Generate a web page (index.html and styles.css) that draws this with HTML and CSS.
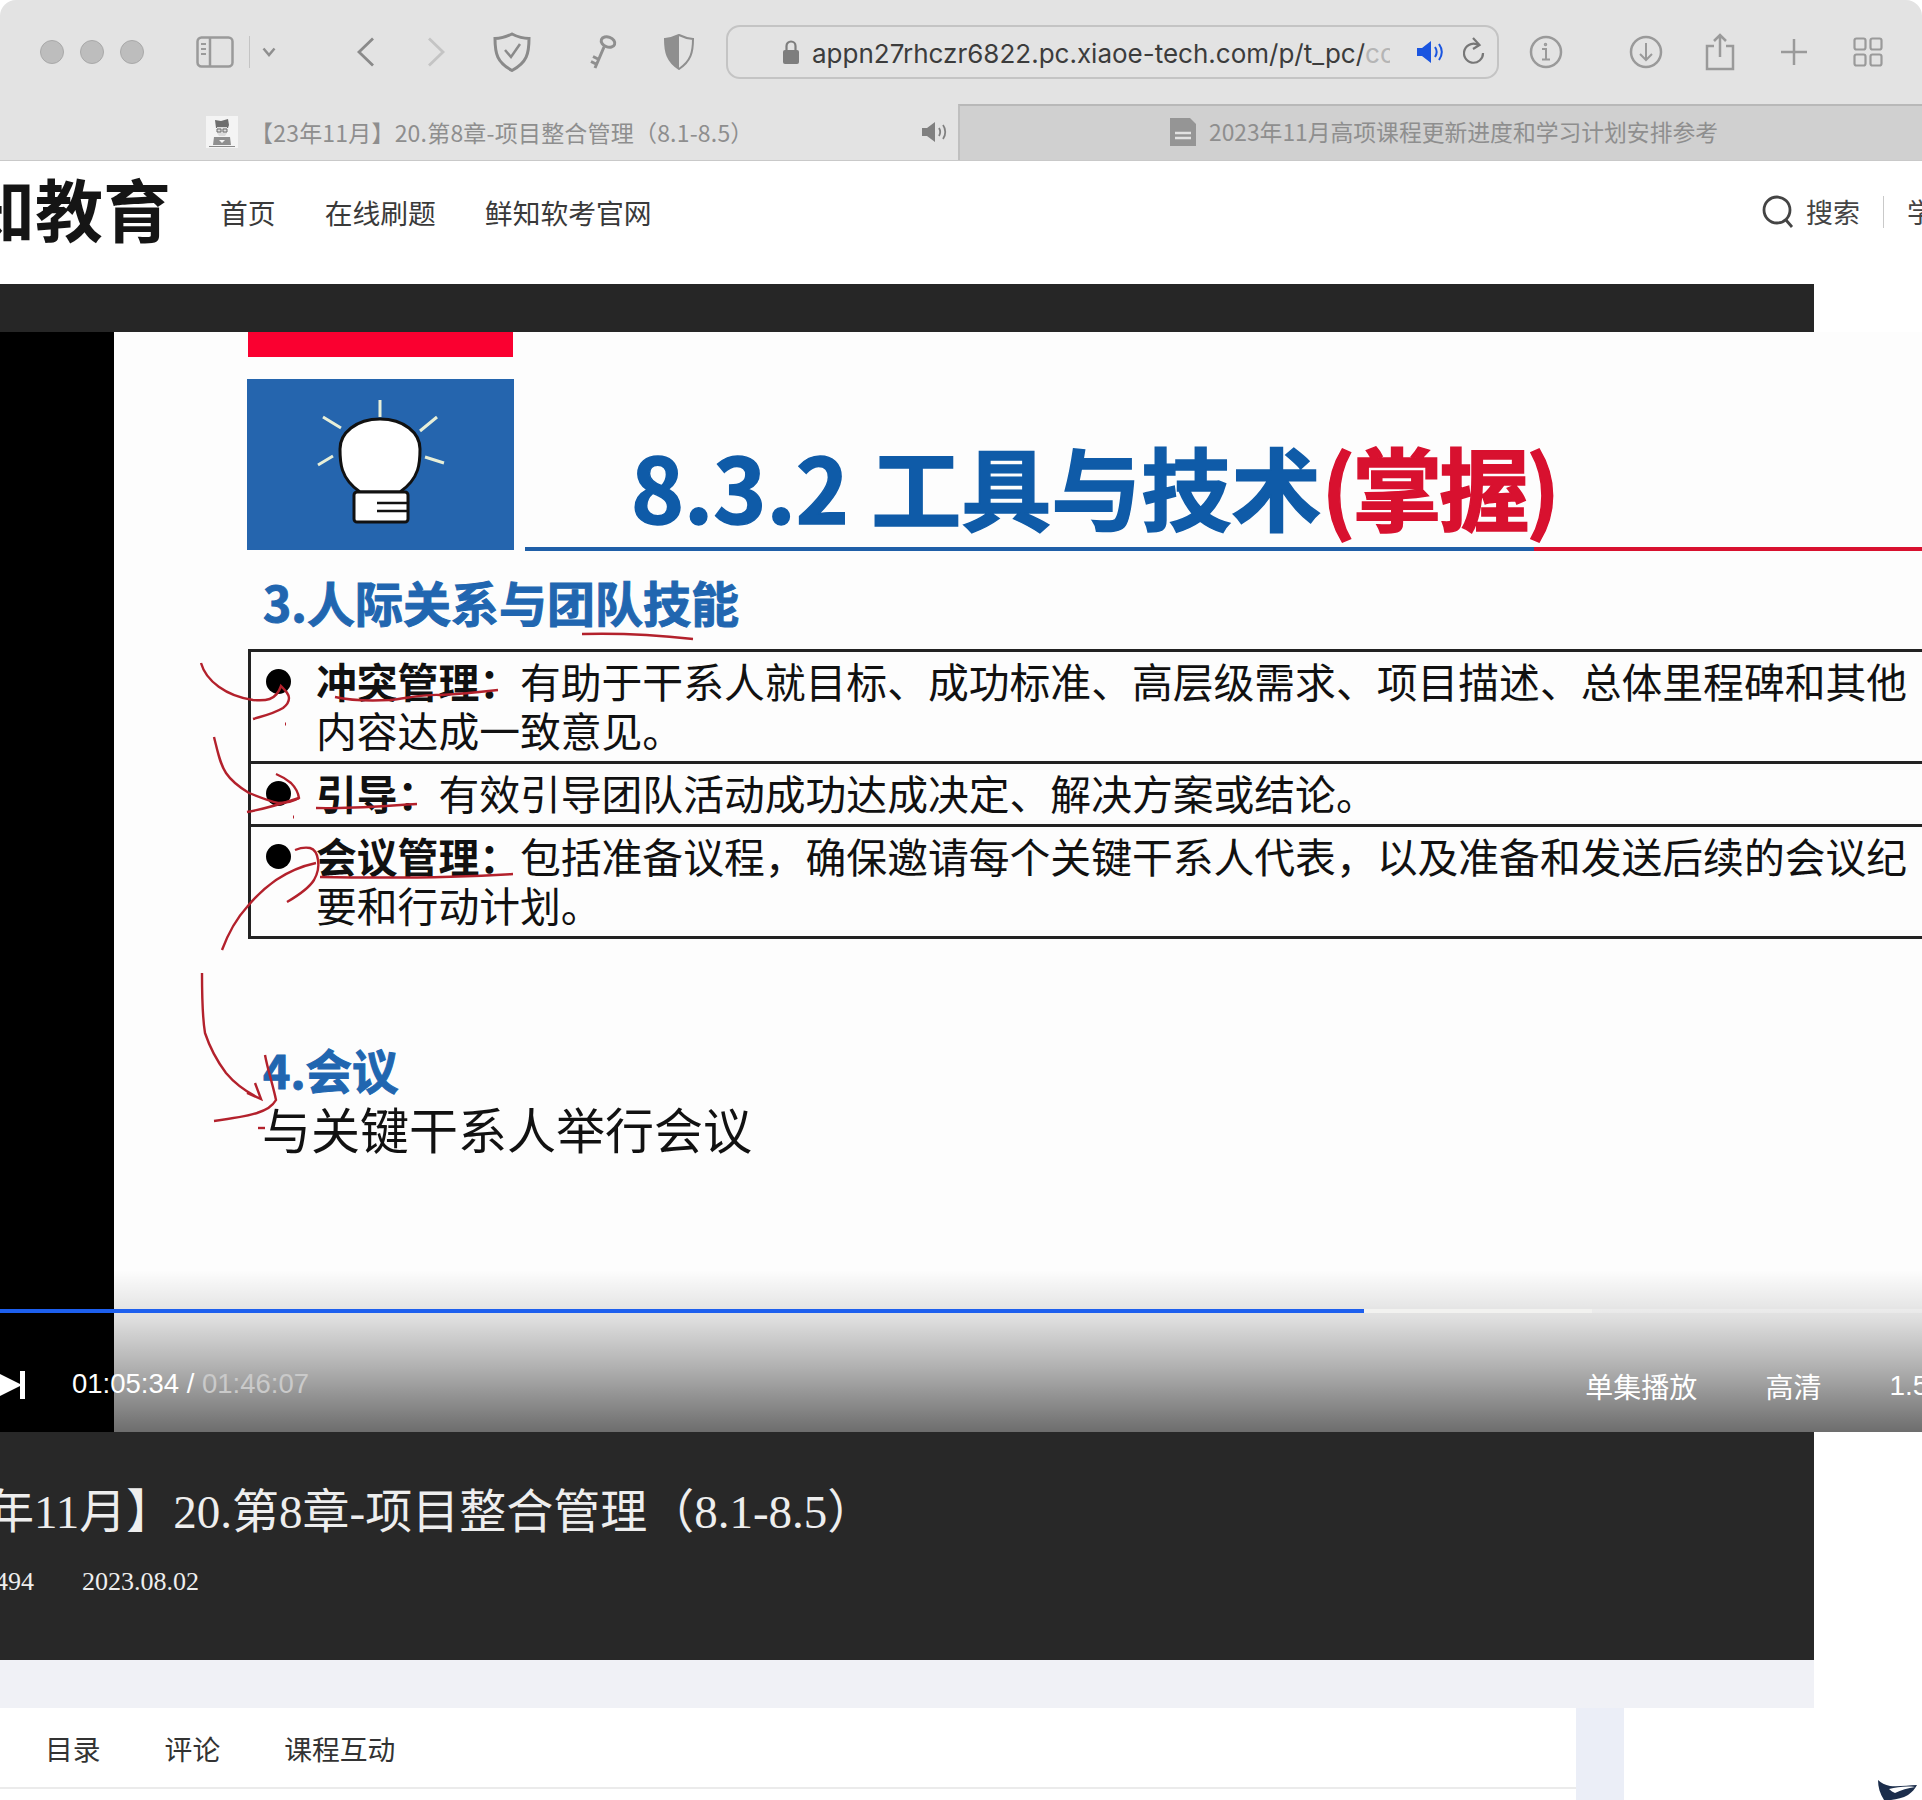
FILE: index.html
```html
<!DOCTYPE html>
<html lang="zh-CN">
<head>
    <meta charset="UTF-8">
    <title>20.第8章-项目整合管理</title>
    <link rel="stylesheet" href="styles.css">
</head>
<body>
    <div class="browser">
        <div class="toolbar">
            <div class="lights"><span></span><span></span><span></span></div>
            <svg class="ico sidebar-ico" width="38" height="32" viewBox="0 0 38 32" fill="none" stroke="#9a9a9a" stroke-width="2.5"><rect x="1.5" y="1.5" width="35" height="29" rx="4"/><path d="M14 2v28"/><path d="M5 8h5M5 13h5M5 18h5" stroke-width="2"/></svg>
            <span class="tool-sep"></span>
            <svg class="ico chevron-ico" width="14" height="10" viewBox="0 0 14 10" fill="none" stroke="#8f8f8f" stroke-width="2.5"><path d="M1.5 1.5 7 8l5.5-6.5"/></svg>
            <svg class="ico back-ico" width="20" height="30" viewBox="0 0 20 30" fill="none" stroke="#8a8a8a" stroke-width="2.8"><path d="M17 1.5 3 15l14 13.5"/></svg>
            <svg class="ico fwd-ico" width="20" height="30" viewBox="0 0 20 30" fill="none" stroke="#c4c4c4" stroke-width="2.8"><path d="M3 1.5 17 15 3 28.5"/></svg>
            <svg class="ico shield-ico" width="38" height="40" viewBox="0 0 38 40" fill="none" stroke="#8a8a8a" stroke-width="3"><path d="M19 2c6 3 11 4.500 17 4.500 0 15-2 24-17 32C4 30.500 2 21.500 2 6.500 8 6.500 13 5 19 2z"/><path d="m12 18 6 7 9-13" stroke-width="2.500"/></svg>
            <svg class="ico key-ico" width="28" height="36" viewBox="0 0 28 36" fill="none" stroke="#8f8f8f" stroke-width="3"><ellipse cx="19" cy="8" rx="7" ry="5" transform="rotate(20 19 8)"/><path d="M15 13 6 34M9 25l-5-2.500M7 30l-5-2.500"/></svg>
            <svg class="ico half-ico" width="30" height="36" viewBox="0 0 30 36"><path d="M15 1c5 2.500 9 3.500 14 4 0 13-2 22-14 30C3 27 1 18 1 5c5-.5 9-1.500 14-4z" fill="none" stroke="#8f8f8f" stroke-width="2"/><path d="M15 1v34C3 27 1 18 1 5c5-.5 9-1.500 14-4z" fill="#8f8f8f"/></svg>

            <div class="address">
                <svg class="lock" width="18" height="26" viewBox="0 0 18 26"><path d="M4.500 12V7a4.500 4.500 0 0 1 9 0v5" fill="none" stroke="#7e7e7e" stroke-width="2.200"/><rect x="1" y="11" width="16" height="14" rx="2" fill="#7e7e7e"/></svg>
                <span class="url">appn27rhczr6822.pc.xiaoe-tech.com/p/t_pc/<span class="url-fade">course</span></span>
                <svg class="speaker" width="28" height="24" viewBox="0 0 28 24"><path d="M1 8h5l9-7v22l-9-7H1z" fill="#1a55e0"/><path d="M19 7c2 3 2 7 0 10M23 4c3.500 5 3.500 11 0 16" fill="none" stroke="#1a55e0" stroke-width="2"/></svg>
                <svg class="reload" width="22" height="30" viewBox="0 0 22 30" fill="none" stroke="#777" stroke-width="2.200"><path d="M16 8.500A9.500 9.500 0 1 0 20 16"/><path d="m10 1 6.500 7L10 12"/></svg>
            </div>

            <svg class="ico info-ico" width="34" height="34" viewBox="0 0 34 34" fill="none" stroke="#9a9a9a" stroke-width="2.500"><circle cx="17" cy="17" r="15"/><path d="M13 14h4v10M13 24.500h8" stroke-width="2"/><circle cx="16.500" cy="9.500" r="1" stroke-width="1.500"/></svg>
            <svg class="ico down-ico" width="34" height="34" viewBox="0 0 34 34" fill="none" stroke="#9a9a9a" stroke-width="2.500"><circle cx="17" cy="17" r="15"/><path d="M17 8v17M11 19l6 6 6-6" stroke-width="2"/></svg>
            <svg class="ico share-ico" width="30" height="38" viewBox="0 0 30 38" fill="none" stroke="#9a9a9a" stroke-width="2.500"><path d="M9 13H2v23h26V13h-7"/><path d="M15 24V2M9 8l6-6 6 6"/></svg>
            <svg class="ico plus-ico" width="28" height="28" viewBox="0 0 28 28" stroke="#9a9a9a" stroke-width="2.500"><path d="M14 1v26M1 14h26"/></svg>
            <svg class="ico grid-ico" width="30" height="30" viewBox="0 0 30 30" fill="none" stroke="#9a9a9a" stroke-width="2.200"><rect x="1.500" y="1.500" width="11" height="11" rx="2"/><rect x="17.500" y="1.500" width="11" height="11" rx="2"/><rect x="1.500" y="17.500" width="11" height="11" rx="2"/><rect x="17.500" y="17.500" width="11" height="11" rx="2"/></svg>
        </div>

        <div class="tabs">
            <div class="tab tab-active">
                <svg class="favicon" width="32" height="32" viewBox="0 0 32 32"><rect width="32" height="32" fill="#f4f4f4"/><path d="M9 4l6 1 7-2 1 6-1 3H10z" fill="#6e6e6e"/><path d="M11 11h10v6l-2 3h-6l-2-3z" fill="#dcdcdc"/><path d="M11 13h4v3h-4zM17 13h4v3h-4z" fill="none" stroke="#6e6e6e"/><path d="M8 21h16l1 8H7z" fill="#8f8f8f"/><path d="M3 30h26v1H3z" fill="#8a8a8a"/><path d="M13 24h6l-3 3z" fill="#f4f4f4"/></svg>
                <span class="tab-title">【23年11月】20.第8章-项目整合管理（8.1-8.5）</span>
                <svg class="tab-sound" width="28" height="22" viewBox="0 0 28 22"><path d="M1 7h5l8-6v20l-8-6H1z" fill="#808080"/><path d="M18 7c1.500 2.500 1.500 5.500 0 8M22 4c3 4 3 10 0 14" fill="none" stroke="#808080" stroke-width="1.800"/></svg>
            </div>
            <div class="tab tab-other">
                <svg class="docicon" width="28" height="28" viewBox="0 0 28 28"><path d="M1 0h20l6 6v22H1z" fill="#959595"/><path d="M6 15h16M6 20h16" stroke="#e2e2e2" stroke-width="2.500"/></svg>
                <span class="tab-title">2023年11月高项课程更新进度和学习计划安排参考</span>
            </div>
        </div>
    </div>

    <header class="site-head">
        <div class="logo">知教育</div>
        <nav class="nav">
            <a>首页</a>
            <a>在线刷题</a>
            <a>鲜知软考官网</a>
        </nav>
        <div class="head-right">
            <svg width="34" height="34" viewBox="0 0 34 34" fill="none" stroke="#444" stroke-width="2.800"><circle cx="15" cy="15" r="13"/><path d="m24 25 6 7"/></svg>
            <span>搜索</span>
            <span class="head-sep"></span>
            <span>学习</span>
        </div>
    </header>

    <div class="band"></div>

    <section class="video">
        <div class="bars"></div>
        <div class="slide">
            <div class="red-tab"></div>
            <div class="slide-head">
                <div class="bulb-box">
                    <svg width="267" height="171" viewBox="0 0 267 171">
                        <g stroke="#e8efd8" stroke-width="3">
                            <path d="M133 21v17M76 38l18 11M190 38l-17 14M71 86l15-9M178 78l19 6"/>
                        </g>
                        <path d="M113 113c-20-14-20-30-20-43 0-16 16-30 40-30s40 14 40 30c0 13 0 29-20 43z" fill="#fff" stroke="#111" stroke-width="3"/>
                        <rect x="107" y="113" width="54" height="30" rx="3" fill="#fff" stroke="#111" stroke-width="3"/>
                        <path d="M130 124h30M130 132h30" stroke="#111" stroke-width="2.500"/>
                    </svg>
                </div>
                <h2 class="slide-title">8.3.2 工具与技术<span class="title-red">(掌握)</span></h2>
            </div>
            <div class="slide-rule"></div>
            <h3 class="sec-title">3.人际关系与团队技能</h3>
            <div class="points">
                <div class="point">
                    <i class="dot"></i>
                    <p><b>冲突管理：</b>有助于干系人就目标、成功标准、高层级需求、项目描述、总体里程碑和其他<br>内容达成一致意见。</p>
                </div>
                <div class="point">
                    <i class="dot"></i>
                    <p><b>引导：</b>有效引导团队活动成功达成决定、解决方案或结论。</p>
                </div>
                <div class="point">
                    <i class="dot"></i>
                    <p><b>会议管理：</b>包括准备议程，确保邀请每个关键干系人代表，以及准备和发送后续的会议纪<br>要和行动计划。</p>
                </div>
            </div>
            <h3 class="sec-title sec-meeting">4.会议</h3>
            <p class="meeting-text">与关键干系人举行会议</p>
        </div>

        <!-- red pen marks drawn on the video -->
        <svg class="pen" width="1922" height="1100" viewBox="0 332 1922 1100" fill="none" stroke="#b3212c" stroke-width="2.400">
            <path d="M201 663c5 18 25 33 52 37 12 1 23 1 28-14 5 5 8 8 8 12 0 4-2 7-6 10-10 6-20 8-30 11"/>
            <path d="M335 697c18 4 36 4 55 3 18-2 35-6 50-5 20-1 40-3 58-5"/>
            <path d="M214 737c4 16 6 27 12 36 6 9 13 14 23 20 10 4 20 8 29 10 8 0 16-2 21-5-1-6-4-11-8-15-5-4-10-7-15-9"/>
            <path d="M299 798c-18 6-35 11-52 14"/>
            <path d="M316 808c30 1 65-2 101-4"/>
            <path d="M222 950c6-16 14-31 25-43 10-12 19-20 29-27 12-8 26-14 40-17"/>
            <path d="M287 902c12-7 22-14 27-22 4-7 5-14 4-20-1-7-4-11-8-12-5-1-10 0-15 2"/>
            <path d="M320 877c60 1 130 1 193-3"/>
            <path d="M582 634c35-1 75 1 111 5"/>
            <path d="M202 973c0 22 0 42 3 60 5 15 12 28 21 40 10 12 22 20 35 26M255 1083l6 16-14-6"/>
            <path d="M265 1055c3 16 8 30 11 45-4 7-10 10-19 13-13 4-28 6-43 8"/>
            <path d="M258 1128h7"/>
            <path d="M285 724h1M293 817h1" stroke-width="3"/>
        </svg>

        <div class="controls">
            <div class="progress">
                <div class="progress-buf" style="width: 1592px"></div>
                <div class="progress-done" style="width: 1364px"></div>
            </div>
            <div class="ctrl-row">
                <svg class="next-ico" width="28" height="30" viewBox="0 0 28 30" fill="#fff"><path d="M-6 1 22 15-6 29z"/><rect x="20" y="1" width="5" height="28"/></svg>
                <span class="time">01:05:34 / <span class="time-total">01:46:07</span></span>
                <span class="ctrl-btn ctrl-mode">单集播放</span>
                <span class="ctrl-btn ctrl-hd">高清</span>
                <span class="ctrl-btn ctrl-speed">1.5X</span>
            </div>
        </div>
    </section>

    <section class="info">
        <h1 class="course-title">【23年11月】20.第8章-项目整合管理（8.1-8.5）</h1>
        <div class="course-meta"><span class="views">1494</span><span>2023.08.02</span></div>
    </section>
    <div class="info-gap"></div>

    <section class="below">
        <div class="below-main">
            <a>目录</a>
            <a>评论</a>
            <a>课程互动</a>
        </div>
        <div class="below-gap"></div>
        <div class="below-side">
            <svg width="44" height="20" viewBox="0 0 44 20"><path d="M0 0c3 3 7 5 12 6 9 1 18-1 27-1-2 4-5 7-9 10-5 3-11 4-17 5H6C2 14 0 7 0 0z" fill="#1b2d4b"/><path d="M11 9c8-2 17-3 26-2-7 1-14 3-20 6-2-1-4-2-6-4z" fill="#fff"/></svg>
        </div>
    </section>
</body>
</html>
```

FILE: styles.css
```css
* {
    box-sizing: border-box;
}

html, body {
    margin: 0;
    padding: 0;
    background: #fff;
}

body {
    width: 1922px;
    height: 1800px;
    overflow: hidden;
    font-family: "Noto Sans CJK SC", sans-serif;
}

/* browser chrome */
.browser {
    height: 161px;
    background: #e3e3e3;
    border-radius: 16px 16px 0 0;
    border-bottom: 1px solid #c9c9c9;
}

.toolbar {
    height: 104px;
    display: flex;
    align-items: center;
    padding-left: 40px;
}

.lights {
    display: flex;
    gap: 16px;
}

.lights span {
    width: 24px;
    height: 24px;
    border-radius: 50%;
    background: #bdbdbd;
    border: 1px solid #a9a9a9;
}

.ico {
    flex: none;
}

.sidebar-ico { margin-left: 52px; }
.tool-sep {
    width: 1px;
    height: 32px;
    background: #c4c4c4;
    margin-left: 15px;
}
.chevron-ico { margin-left: 12px; }
.back-ico { margin-left: 80px; }
.fwd-ico { margin-left: 50px; }
.shield-ico { margin-left: 47px; }
.key-ico { margin-left: 58px; }
.half-ico { margin-left: 47px; }

.address {
    width: 773px;
    height: 54px;
    margin-left: 32px;
    border: 2px solid #c4c4c4;
    border-radius: 14px;
    display: flex;
    align-items: center;
    padding-left: 54px;
}

.lock {
    flex: none;
}

.url {
    width: 578px;
    margin: 2px 0 0 12px;
    font-family: Inter, sans-serif;
    font-size: 26px;
    color: #3c3c3c;
    white-space: nowrap;
    overflow: hidden;
}

.url-fade {
    color: #b5b5b5;
}

.speaker {
    flex: none;
    margin-left: 26px;
}

.reload {
    flex: none;
    margin-left: 19px;
}

.info-ico { margin-left: 30px; }
.down-ico { margin-left: 66px; }
.share-ico { margin-left: 42px; }
.plus-ico { margin-left: 45px; }
.grid-ico { margin-left: 45px; }

.tabs {
    height: 56px;
    display: flex;
}

.tab {
    display: flex;
    align-items: center;
    position: relative;
}

.tab-active {
    width: 958px;
    padding-left: 206px;
}

.tab-other {
    flex: 1;
    background: #d0d0d0;
    border-top: 2px solid #b8b8b8;
    border-left: 2px solid #bfbfbf;
    padding: 0 0 3px 209px;
}

.tab-title {
    margin-left: 12px;
    font-size: 23px;
    color: #8e8e8e;
    white-space: nowrap;
}

.tab-active .tab-title {
    letter-spacing: .2px;
}

.tab-other .tab-title {
    font-size: 22.8px;
}

.tab-sound {
    margin-left: auto;
    margin-right: 9px;
}

/* site header */
.site-head {
    height: 123px;
    display: flex;
    align-items: center;
    padding-bottom: 22px;
}

.logo {
    margin: -8px 0 0 -33px;
    font-size: 68px;
    line-height: 1;
    font-weight: 700;
    color: #151515;
    white-space: nowrap;
}

.nav {
    display: flex;
    gap: 49px;
    margin-left: 49px;
}

.nav a {
    font-size: 27.800px;
    color: #3a3a3a;
}

.head-right {
    margin-left: auto;
    display: flex;
    align-items: center;
    gap: 10px;
    margin-right: -39px;
    font-size: 27px;
    color: #444;
}

.head-sep {
    width: 1px;
    height: 32px;
    margin: 0 13px;
    background: #c9c9c9;
}

.band {
    width: 1814px;
    height: 48px;
    background: #262626;
}

/* video */
.video {
    height: 1100px;
    display: flex;
    position: relative;
    overflow: hidden;
}

.bars {
    flex: none;
    width: 114px;
    background: #000;
}

.slide {
    flex: 1;
    overflow: hidden;
    padding-left: 133px;
    background: #fdfdfd;
}

.red-tab {
    width: 265px;
    height: 25px;
    margin-left: 1px;
    background: #fa0030;
}

.slide-head {
    display: flex;
    margin-top: 22px;
    align-items: flex-end;
}

.bulb-box {
    flex: none;
    width: 267px;
    height: 171px;
    background: #2565ae;
}

.bulb-box svg {
    display: block;
}

.slide-title {
    margin: 0 0 11px 117px;
    font-size: 90px;
    line-height: 108px;
    font-weight: 700;
    word-spacing: 2px;
    color: #0f5ba8;
    white-space: nowrap;
    -webkit-text-stroke: 1.5px #0f5ba8;
}

.title-red {
    color: #d8112f;
    letter-spacing: -3px;
    -webkit-text-stroke: 1.5px #d8112f;
}

.slide-rule {
    height: 4px;
    margin: -3px 0 0 278px;
    background: linear-gradient(to right, #1f5fa8 1009px, #d8112f 1009px);
}

.sec-title {
    margin: 22px 0 0 16px;
    font-size: 48px;
    line-height: 56px;
    font-weight: 700;
    color: #2166b0;
    -webkit-text-stroke: 1px #2166b0;
}

.points {
    width: 1800px;
    margin-top: 20px;
    margin-left: 1px;
    border: 3px solid #222;
    color: #111;
}

.point {
    display: flex;
    padding: 4px 0 7px 15px;
    border-top: 3px solid #222;
}

.point:first-child {
    border-top: none;
}

.dot {
    flex: none;
    width: 25px;
    height: 25px;
    margin-top: 13px;
    border-radius: 50%;
    background: #000;
}

.point p {
    margin: 0 0 0 25px;
    font-size: 40.8px;
    line-height: 49px;
    white-space: nowrap;
}

.sec-meeting {
    margin-top: 102px;
    font-size: 46.500px;
}

.meeting-text {
    margin: 0 0 0 15px;
    font-size: 49px;
    line-height: 62px;
    color: #111;
}

.pen {
    position: absolute;
    left: 0;
    top: 0;
}

.controls {
    position: absolute;
    left: 0;
    right: 0;
    bottom: 0;
    height: 162px;
    padding-top: 39px;
    background: linear-gradient(to bottom, rgba(0,0,0,0), rgba(0,0,0,.12) 30%, rgba(0,0,0,.3) 60%, rgba(0,0,0,.57));
}

.progress {
    height: 4px;
    position: relative;
    background: rgba(255,255,255,.25);
}

.progress-buf,
.progress-done {
    position: absolute;
    left: 0;
    top: 0;
    height: 4px;
}

.progress-buf {
    background: #f2f2f0;
}

.progress-done {
    background: #1d5fee;
}

.ctrl-row {
    display: flex;
    align-items: center;
    height: 36px;
    margin-top: 55px;
    color: #fff;
    font-size: 28px;
}

.next-ico {
    flex: none;
    margin-top: -2px;
}

.time {
    margin: -4px 0 0 44px;
    font-family: "Liberation Sans", sans-serif;
    font-size: 27.500px;
    white-space: nowrap;
}

.time-total {
    color: #cacaca;
}

.ctrl-btn {
    white-space: nowrap;
}

.ctrl-mode { margin-left: auto; }
.ctrl-hd { margin-left: 68px; }
.ctrl-speed {
    margin-left: 68px;
    margin-right: -25px;
    font-family: "Liberation Sans", sans-serif;
}

/* info under the video */
.info {
    width: 1814px;
    height: 228px;
    background: #282828;
    color: #eee;
    overflow: hidden;
    padding-top: 50px;
}

.course-title {
    margin: 0 0 0 -107px;
    font-family: "Liberation Serif", "Noto Sans CJK SC", serif;
    font-size: 47px;
    line-height: 60px;
    font-weight: 400;
    white-space: nowrap;
}

.course-meta {
    display: flex;
    gap: 48px;
    margin: 25px 0 0 -18px;
    font-family: "Liberation Serif", serif;
    font-size: 26px;
    line-height: 30px;
}

.info-gap {
    width: 1814px;
    height: 48px;
    background: #f0f1f6;
}

.below {
    height: 92px;
    display: flex;
}

.below-main {
    width: 1576px;
    height: 81px;
    border-bottom: 2px solid #ebebeb;
    display: flex;
    align-items: center;
    gap: 64px;
    padding: 0 0 0 45px;
}

.below-main a {
    font-size: 27.800px;
    color: #333;
}

.below-gap {
    width: 48px;
    background: #ebeef7;
}

.below-side {
    flex: 1;
    display: flex;
    justify-content: flex-end;
    align-items: flex-end;
}

.below-side svg {
    display: block;
}
```
